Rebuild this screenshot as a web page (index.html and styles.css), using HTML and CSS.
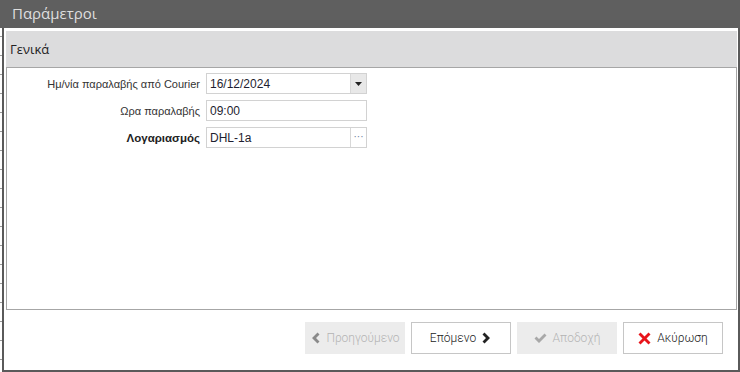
FILE: index.html
```html
<!DOCTYPE html>
<html lang="el">
<head>
<meta charset="UTF-8">
<title>Παράμετροι</title>
<link rel="stylesheet" href="styles.css">
</head>
<body>

<div class="TitleBar">Παράμετροι</div>

<div class="Window">
  <div class="Group">
    <div class="GroupHeader">Γενικά</div>
    <div class="GroupBody">
      <div class="FieldRow">
        <label class="FieldLabel">Ημ/νία παραλαβής από Courier</label>
        <div class="FieldBox">
          <span class="FieldValue">16/12/2024</span>
          <span class="DropButton">
            <svg width="7" height="4" viewBox="0 0 7 4"><path d="M0 0h7L3.5 4z" fill="#222"/></svg>
          </span>
        </div>
      </div>
      <div class="FieldRow">
        <label class="FieldLabel">Ωρα παραλαβής</label>
        <div class="FieldBox">
          <span class="FieldValue">09:00</span>
        </div>
      </div>
      <div class="FieldRow">
        <label class="FieldLabel Bold">Λογαριασμός</label>
        <div class="FieldBox">
          <span class="FieldValue">DHL-1a</span>
          <span class="EllipsisButton">···</span>
        </div>
      </div>
    </div>
  </div>

  <div class="ButtonBar">
    <button type="button" class="Button Disabled">
      <svg width="10" height="12" viewBox="0 0 10 12"><path d="M7.5 0.5L9.5 2.5L6 6L9.5 9.5L7.5 11.5L2 6z" fill="#8a8a8a"/></svg>
      Προηγούμενο
    </button>
    <button type="button" class="Button">
      Επόμενο
      <svg width="10" height="12" viewBox="0 0 10 12"><path d="M2.5 0.5L0.5 2.5L4 6L0.5 9.5L2.5 11.5L8 6z" fill="#222"/></svg>
    </button>
    <button type="button" class="Button Disabled">
      <svg width="13" height="11" viewBox="0 0 13 11"><path d="M0.5 5.5L2.5 3.5L5 6L10.5 0.5L12.5 2.5L5 10z" fill="#a8a8a8"/></svg>
      Αποδοχή
    </button>
    <button type="button" class="Button">
      <svg width="13" height="13" viewBox="0 0 13 13"><path d="M2.5 0.5L6.5 4.5L10.5 0.5L12.5 2.5L8.5 6.5L12.5 10.5L10.5 12.5L6.5 8.5L2.5 12.5L0.5 10.5L4.5 6.5L0.5 2.5z" fill="#e8141b"/></svg>
      Ακύρωση
    </button>
  </div>
</div>

</body>
</html>
```

FILE: styles.css
```css
* {
  box-sizing: border-box;
  padding: 0px;
  margin: 0px;
}

html {
  background-color: white;
  background-image: repeating-linear-gradient(to bottom, transparent 0px, transparent 17px, #9a9a9a 17px, #9a9a9a 18px, transparent 18px, transparent 19px);
  background-size: 2px 100%;
  background-repeat: no-repeat;
}

body {
  font-family: "Liberation Sans", Arial, sans-serif;
  font-size: 11px;
  color: #222;
  width: 740px;
  height: 372px;
  overflow: hidden;
}

.TitleBar {
  height: 28px;
  background-color: #5f5f5f;
  color: #dedede;
  font-family: "Open Sans", sans-serif;
  font-size: 15px;
  padding: 3px 0 0 12px;
}

.Window {
  margin-left: 2px;
  width: 738px;
  height: 344px;
  border-left: 2px solid #5a5a5a;
  border-right: 2px solid #5a5a5a;
  border-bottom: 2px solid #5a5a5a;
  padding: 3px 1px 0 2px;
  background-color: white;
}

.GroupHeader {
  height: 36px;
  background-color: #dcdcdd;
  font-family: "Open Sans", sans-serif;
  font-size: 13px;
  color: #222;
  padding: 9px 0 0 4px;
}

.GroupBody {
  height: 243px;
  border: 1px solid #a6a6a6;
  padding-top: 5px;
}

.FieldRow {
  display: flex;
  align-items: center;
  height: 21px;
  margin-bottom: 6px;
}

.FieldLabel {
  width: 199px;
  text-align: right;
  padding-right: 6px;
  color: #333;
}

.Bold {
  font-weight: bold;
  font-size: 11.5px;
  color: #222;
}

.FieldBox {
  display: flex;
  align-items: stretch;
  width: 161px;
  height: 21px;
  border: 1px solid #d2d2d2;
  font-size: 12px;
}

.FieldValue {
  flex: 1;
  padding: 3px 0 0 3px;
  color: #1e1e30;
}

.DropButton {
  width: 16px;
  background-color: #e8e8e8;
  border-left: 1px solid #d8d8d8;
  display: flex;
  justify-content: center;
  align-items: center;
}

.EllipsisButton {
  width: 16px;
  border-left: 1px solid #d8d8d8;
  color: #6a7a9a;
  font-size: 10px;
  text-align: center;
  padding-top: 3px;
}

.ButtonBar {
  display: flex;
  justify-content: flex-end;
  gap: 6px;
  padding: 12px 14px 0 0;
}

.Button {
  width: 100px;
  height: 32px;
  display: flex;
  justify-content: center;
  align-items: center;
  gap: 6px;
  background-color: white;
  border: 1px solid #c6c6c6;
  font-family: Roboto, sans-serif;
  font-size: 12px;
  font-weight: 300;
  color: #222;
}

.Disabled {
  background-color: #ececec;
  border-color: #ececec;
  color: #b4b4b4;
}
```
